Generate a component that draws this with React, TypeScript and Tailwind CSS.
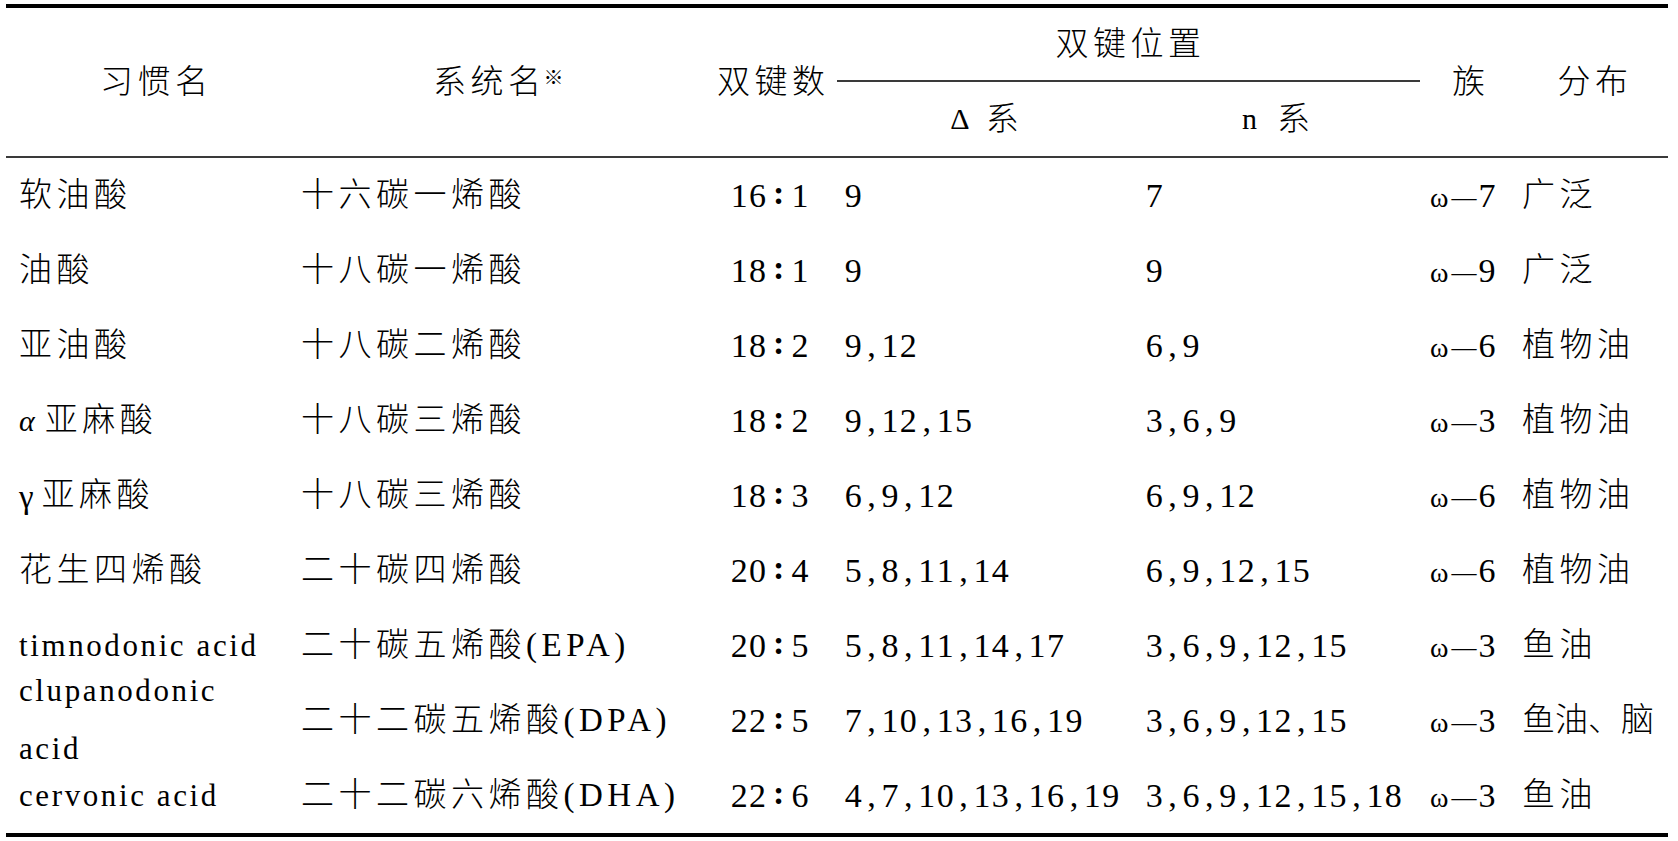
import React from "react";

type Row = {
  name: React.ReactNode;
  sys: string;
  ratio: string;
  delta: string;
  n: string;
  fam: string;
  dist: React.ReactNode;
};

const rows: Row[] = [
  { name: "软油酸", sys: "十六碳一烯酸", ratio: "16:1", delta: "9", n: "7", fam: "7", dist: "广泛" },
  { name: "油酸", sys: "十八碳一烯酸", ratio: "18:1", delta: "9", n: "9", fam: "9", dist: "广泛" },
  { name: "亚油酸", sys: "十八碳二烯酸", ratio: "18:2", delta: "9,12", n: "6,9", fam: "6", dist: "植物油" },
  {
    name: (
      <span className="flex items-center">
        <span className="font-[Liberation_Serif,serif] font-normal italic text-[30px] tracking-normal mr-[10px]">α</span>
        <span>亚麻酸</span>
      </span>
    ),
    sys: "十八碳三烯酸",
    ratio: "18:2",
    delta: "9,12,15",
    n: "3,6,9",
    fam: "3",
    dist: "植物油",
  },
  {
    name: (
      <span className="flex items-center">
        <span className="font-[Liberation_Serif,serif] font-normal text-[33px] tracking-normal mr-[8px] relative top-[2px]">γ</span>
        <span>亚麻酸</span>
      </span>
    ),
    sys: "十八碳三烯酸",
    ratio: "18:3",
    delta: "6,9,12",
    n: "6,9,12",
    fam: "6",
    dist: "植物油",
  },
  { name: "花生四烯酸", sys: "二十碳四烯酸", ratio: "20:4", delta: "5,8,11,14", n: "6,9,12,15", fam: "6", dist: "植物油" },
  {
    name: <span className="text-[31px] tracking-[2.6px] whitespace-nowrap">timnodonic acid</span>,
    sys: "二十碳五烯酸(EPA)",
    ratio: "20:5",
    delta: "5,8,11,14,17",
    n: "3,6,9,12,15",
    fam: "3",
    dist: "鱼油",
  },
  {
    name: (
      <span className="flex flex-col text-[31px] tracking-[2.6px] leading-[58px] mt-[-2px]">
        <span>clupanodonic</span>
        <span>acid</span>
      </span>
    ),
    sys: "二十二碳五烯酸(DPA)",
    ratio: "22:5",
    delta: "7,10,13,16,19",
    n: "3,6,9,12,15",
    fam: "3",
    dist: <span className="tracking-normal">鱼油、脑</span>,
  },
  {
    name: <span className="text-[31px] tracking-[2.6px] whitespace-nowrap">cervonic acid</span>,
    sys: "二十二碳六烯酸(DHA)",
    ratio: "22:6",
    delta: "4,7,10,13,16,19",
    n: "3,6,9,12,15,18",
    fam: "3",
    dist: "鱼油",
  },
];

function Cells({ s }: { s: string }) {
  return (
    <span className="inline-flex font-[Liberation_Serif,serif] font-normal text-[34px] leading-none tracking-normal">
      {s.split("").map((c, i) =>
        c === ":" ? (
          <span key={i} className="w-[24px] text-center relative top-[-3px] font-bold">
            {c}
          </span>
        ) : (
          <span key={i} className="w-[18.4px] text-center">
            {c}
          </span>
        )
      )}
    </span>
  );
}

export default function App() {
  return (
    <div className="w-[1678px] h-[841px] bg-white text-black font-[Liberation_Serif,Noto_Sans_CJK_SC,serif] font-light text-[33px] tracking-[4.5px] leading-none">
      <div className="pt-[4px] pl-[6px]">
        <div className="w-[1662px] border-t-[4px] border-black">
          {/* Header */}
          <div className="grid grid-cols-[295px_399px_137px_583px_248px] grid-rows-[74px_74px] border-b-2 border-[#3a3a3a]">
            <div className="row-span-2 flex items-center pl-[94px]">习惯名</div>
            <div className="row-span-2 flex items-center pl-[132px]">
              <span>系统名</span>
              <span className="self-start mt-[60px] text-[20px] tracking-normal ml-[-2px]">※</span>
            </div>
            <div className="row-span-2 flex items-center pl-[17px]">双键数</div>
            <div className="flex items-center justify-center border-b-2 border-[#3a3a3a] pl-[4px]">双键位置</div>
            <div className="row-span-2 flex items-center pl-[32px] whitespace-nowrap">
              <span>族</span>
              <span className="ml-[68px]">分布</span>
            </div>
            <div className="col-start-4 row-start-2 grid grid-cols-2">
              <div className="flex items-center justify-center pl-[8px]">
                <span className="font-[Liberation_Serif,serif] font-normal text-[30px] tracking-normal mr-[16px]">Δ</span>
                <span>系</span>
              </div>
              <div className="flex items-center justify-center pl-[8px]">
                <span className="font-[Liberation_Serif,serif] font-normal text-[30px] tracking-normal mr-[20px]">n</span>
                <span>系</span>
              </div>
            </div>
          </div>

          {/* Body */}
          <div className="border-b-[4px] border-black">
            {rows.map((r, i) => (
              <div
                key={i}
                className="grid grid-cols-[295px_429px_114px_301px_284px_93px_146px] grid-rows-[75px] h-[75px] items-center"
              >
                <div className="pl-[13px] h-full flex flex-col justify-center">{r.name}</div>
                <div className="flex items-center whitespace-nowrap">{r.sys}</div>
                <div className="flex items-center">
                  <Cells s={r.ratio} />
                </div>
                <div className="flex items-center">
                  <Cells s={r.delta} />
                </div>
                <div className="flex items-center">
                  <Cells s={r.n} />
                </div>
                <div className="flex items-baseline font-[Liberation_Serif,serif] font-normal tracking-normal pl-[1px] whitespace-nowrap">
                  <span className="text-[28px]">ω</span>
                  <span className="text-[25px] ml-[3px] relative top-[-1px]">—</span>
                  <span className="text-[34px] ml-[2px]">{r.fam}</span>
                </div>
                <div className="flex items-center whitespace-nowrap">{r.dist}</div>
              </div>
            ))}
          </div>
        </div>
      </div>
    </div>
  );
}
